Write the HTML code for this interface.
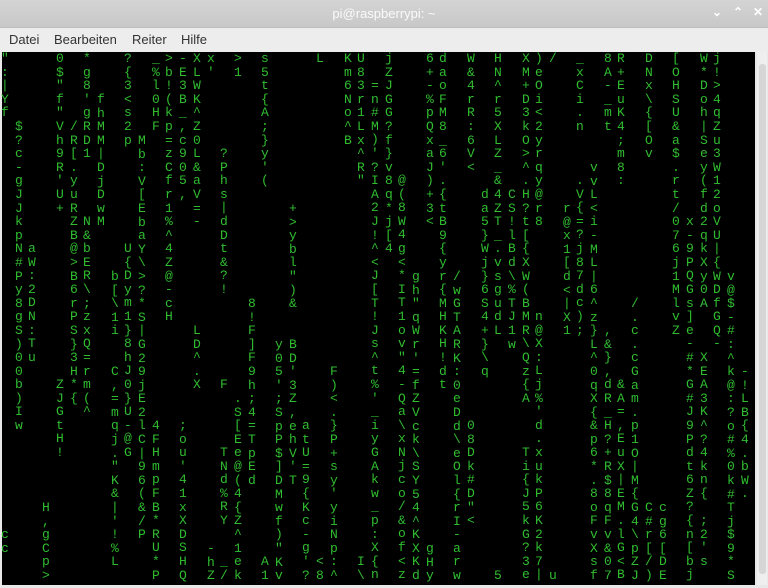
<!DOCTYPE html>
<html><head><meta charset="utf-8"><style>
*{margin:0;padding:0;box-sizing:border-box}
body{width:768px;height:588px;overflow:hidden;background:#e8e8e8;font-family:"Liberation Sans",sans-serif;position:relative}
#tb{position:absolute;left:0;top:0;width:768px;height:28px;background:linear-gradient(#d4d4d4,#c8c8c8);border-bottom:1px solid #bdbdbd}
#tb .t{position:absolute;left:0;width:768px;top:6px;text-align:center;color:#fafafa;font-size:13px}
#tb .i{position:absolute;top:5px;font-size:12px;color:#fff;font-weight:bold}
#mb{position:absolute;left:0;top:28px;width:768px;height:24px;background:#ededed;font-size:13px;color:#333}
#mb span{position:absolute;top:4px}
#term{position:absolute;left:2px;top:52px;width:753px;height:533px;background:#000}
#sb{position:absolute;left:757px;top:52px;width:10px;height:533px;background:#efefef}
#sb div{position:absolute;left:2px;top:12px;width:7px;height:510px;background:#d6d6d6;border-radius:3px}
#m{position:absolute;left:0;top:1px;width:768px;height:583px;overflow:hidden;font-family:"Liberation Mono",monospace;font-size:13px;color:#30bd30}
.s{position:absolute;width:1px;word-break:break-all;line-break:anywhere;overflow-wrap:anywhere;line-height:13.6px}
</style></head><body>
<div id="tb"><div class="t">pi@raspberrypi: ~</div><span class="i" style="left:712px">&#8964;</span><span class="i" style="left:733px">&#8963;</span><span class="i" style="left:753px">&#10005;</span></div>
<div id="mb"><span style="left:9px">Datei</span><span style="left:54px">Bearbeiten</span><span style="left:132px">Reiter</span><span style="left:181px">Hilfe</span></div>
<div id="term"></div>
<div id="sb"><div></div></div>
<div id="m">
<div class="s" style="left:1px;top:51px">":|Yf</div><div class="s" style="left:1px;top:527px">cc</div>
<div class="s" style="left:15px;top:119px">$?c-gJJkpN#Py8gS)00b)Iw</div>
<div class="s" style="left:28px;top:241px">aW:2DN:Tu</div>
<div class="s" style="left:42px;top:500px">H,gCp&gt;</div>
<div class="s" style="left:56px;top:51px">0$"f"Vh9R'U+</div><div class="s" style="left:56px;top:377px">ZJGtH!</div>
<div class="s" style="left:70px;top:119px">/R[.yuRZB@&gt;B6rPS}3H*{</div>
<div class="s" style="left:83px;top:51px">*g8'gRD1</div><div class="s" style="left:83px;top:214px">N&amp;bER\;zxQ=rm(^</div>
<div class="s" style="left:97px;top:92px">fhMM|DjDwM</div>
<div class="s" style="left:111px;top:269px">b[\1i</div><div class="s" style="left:111px;top:364px">C,=mqj."K&amp;|'!%L</div>
<div class="s" style="left:124px;top:51px">?{3&lt;s2p</div><div class="s" style="left:124px;top:241px">U{Dym1}8hJ0}U-@G</div>
<div class="s" style="left:138px;top:133px">Mb:V[EbaY\&gt;?*S|G29jE2lC|96(&amp;/P</div>
<div class="s" style="left:152px;top:51px">_%l0HF</div><div class="s" style="left:152px;top:418px">4FHmpFB*RU*P</div>
<div class="s" style="left:165px;top:51px">&gt;b!(kp=zCfr1%^4Z@-cH</div>
<div class="s" style="left:179px;top:51px">-E3B_,c905,</div><div class="s" style="left:179px;top:418px">;ou'41xXDSHQ</div>
<div class="s" style="left:193px;top:51px">XLWK^Z0L&amp;aV=-</div><div class="s" style="left:193px;top:323px">LD^.X</div>
<div class="s" style="left:207px;top:51px">x'</div><div class="s" style="left:207px;top:541px">-hZ</div>
<div class="s" style="left:220px;top:146px">?Phs|dDt&amp;?!</div><div class="s" style="left:220px;top:377px">F</div><div class="s" style="left:220px;top:445px">TNd%RY</div><div class="s" style="left:220px;top:554px">_/</div>
<div class="s" style="left:234px;top:51px">&gt;1</div><div class="s" style="left:234px;top:391px">.S[Ee@(4{Z^1</div><div class="s" style="left:234px;top:554px">ek</div>
<div class="s" style="left:248px;top:296px">8!F]F9h;4=TpEd</div>
<div class="s" style="left:261px;top:51px">s5t{A;}y'(</div><div class="s" style="left:261px;top:554px">A1</div>
<div class="s" style="left:275px;top:337px">y05';SpP$]DMwf)"Kv</div>
<div class="s" style="left:289px;top:201px">+&gt;ybl")&amp;</div><div class="s" style="left:289px;top:337px">BD'3Z,ehV'T</div>
<div class="s" style="left:302px;top:418px">atU=9{Kc-g'?</div>
<div class="s" style="left:316px;top:51px">L</div><div class="s" style="left:316px;top:554px">&lt;8</div>
<div class="s" style="left:330px;top:364px">F)&lt;.}P+sy'yiNp:^</div>
<div class="s" style="left:344px;top:51px">Km6No^B</div>
<div class="s" style="left:357px;top:51px">U83r1Lx^R"</div><div class="s" style="left:357px;top:554px">I\</div>
<div class="s" style="left:371px;top:78px">=n#M)'?IA2J!^&lt;J[T!Js^t%'_iyGAkw_p:X{n</div>
<div class="s" style="left:385px;top:51px">jZJGG?f}v8q*j[4</div>
<div class="s" style="left:398px;top:173px">@(8W4g&lt;*IT1ov"4-Qa\xNjco/&amp;of&lt;z</div>
<div class="s" style="left:412px;top:269px">gh"qWr'=fZVck\SY54^KXKd</div>
<div class="s" style="left:426px;top:51px">6+-%pQxaJ)+3&lt;</div><div class="s" style="left:426px;top:541px">gHy</div>
<div class="s" style="left:439px;top:51px">daoFM8_6'.{tB9{yr{MHKH!dt</div>
<div class="s" style="left:453px;top:269px">/wGTARK:0eDd\eOl{rI-arw</div>
<div class="s" style="left:467px;top:51px">W&amp;4rR:6V&lt;</div><div class="s" style="left:467px;top:418px">08Dk#D"&lt;</div>
<div class="s" style="left:481px;top:187px">da5}Wj}6S4+}\q</div>
<div class="s" style="left:494px;top:51px">HN^r5XLZ_&amp;4ZT_.vsgudL</div><div class="s" style="left:494px;top:568px">5</div>
<div class="s" style="left:508px;top:187px">CS!lBd\%TJ1w</div>
<div class="s" style="left:522px;top:51px">XM+D3kO&gt;^.H?t[{XW(BMR\Qz{A</div><div class="s" style="left:522px;top:445px">Ti{J5kG?3e</div>
<div class="s" style="left:535px;top:51px">)eOi&lt;2yrqy@r8</div><div class="s" style="left:535px;top:309px">n@X:Lj%'d.xukP6K2k7|</div>
<div class="s" style="left:549px;top:51px">/</div><div class="s" style="left:549px;top:568px">u</div>
<div class="s" style="left:563px;top:201px">r@x1[d&lt;|X1</div>
<div class="s" style="left:576px;top:51px">_xCi.n</div><div class="s" style="left:576px;top:173px">.V{=?j87dc);</div>
<div class="s" style="left:590px;top:160px">vvL&lt;i-ML|6^z}L^0qX{&amp;p6*.8oFvXsf</div>
<div class="s" style="left:604px;top:51px">8A-_mt</div><div class="s" style="left:604px;top:323px">,&amp;},dR_H?+R$8qFv&amp;07</div>
<div class="s" style="left:617px;top:51px">R+EuK4;m8:</div><div class="s" style="left:617px;top:377px">&amp;A=,EuX|EM.lG&lt;B</div>
<div class="s" style="left:631px;top:296px">/.c.cGam.p1O|M{G4\pZJ</div>
<div class="s" style="left:645px;top:51px">DNx\{[Ov</div><div class="s" style="left:645px;top:500px">C#r[/)</div>
<div class="s" style="left:659px;top:500px">cg6[DE</div>
<div class="s" style="left:672px;top:51px">[OHSU&amp;a$.rt/076j1MlvZ</div>
<div class="s" style="left:686px;top:214px">x-9PQGs]e-#*G#J9Pdt6Z?{n[bj</div>
<div class="s" style="left:700px;top:51px">W*Doh|Sey(fd2qkXy0A</div><div class="s" style="left:700px;top:350px">XEA3K^?4kn{</div><div class="s" style="left:700px;top:513px">;2's</div>
<div class="s" style="left:713px;top:51px">j!&gt;4qZu3W12oVU|{WDfGQ-</div>
<div class="s" style="left:727px;top:269px">v@$-#:^k@:?o#%0k#Tj$9*S</div>
<div class="s" style="left:741px;top:364px">-!LB{4.bW.</div>
</div>
</body></html>
